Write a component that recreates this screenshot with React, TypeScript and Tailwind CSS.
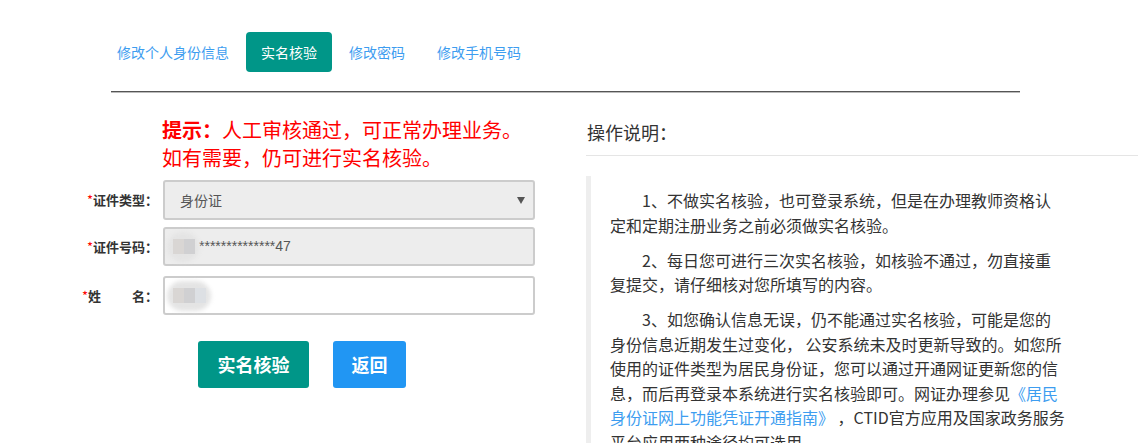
import React from 'react'

const tabs = ['修改个人身份信息', '实名核验', '修改密码', '修改手机号码']

function Label({ children }: { children: React.ReactNode }) {
  return (
    <div className="w-[80px] shrink-0 text-right text-[13px] font-bold text-[#333] pr-[2px]">
      <span className="text-[#f00] font-normal">*</span>
      {children}
    </div>
  )
}

function Blur({ w }: { w: number }) {
  return (
    <div className="relative h-[30px] shrink-0" style={{ width: w }}>
      <div className="absolute inset-0 rounded-full bg-[#e4e4e4] blur-[2px]" />
      <div className="absolute left-[6px] top-[7px] flex">
        <div className="w-[11px] h-[15px] bg-[#d9d6d4]" />
        <div className="w-[11px] h-[15px] bg-[#d0d0d2]" />
        {w > 34 && <div className="w-[11px] h-[15px] bg-[#dde0e4]" />}
      </div>
    </div>
  )
}

export default function App() {
  return (
    <div className="w-[1138px] h-[443px] overflow-hidden bg-white font-['Microsoft_YaHei','Noto_Sans_CJK_SC',sans-serif] text-[#333]">
      {/* Tabs */}
      <div className="flex gap-[2px] pl-[102px] pt-[32px]">
        {tabs.map((t, i) => (
          <div
            key={t}
            className={`h-[40px] px-[15px] flex items-center text-[14px] rounded-[4px] ${i === 1 ? 'bg-[#009688] text-white' : 'text-[#3d9df0]'}`}
          >
            {t}
          </div>
        ))}
      </div>
      <div className="ml-[111px] mt-[19px] w-[909px] h-[2px] border-t border-[#555] bg-[#bbb]" />

      <div className="flex">
        {/* Left */}
        <div className="w-[586px] shrink-0">
          <div className="ml-[162px] mt-[23px] text-[20px] leading-[28px] text-[#f00]">
            <span className="font-bold">提示：</span>人工审核通过，可正常办理业务。
            <br />
            如有需要，仍可进行实名核验。
          </div>

          <div className="mt-[8px] pl-[80px] flex items-center">
            <Label>证件类型：</Label>
            <div className="ml-[3px] w-[372px] h-[40px] border-2 border-[#ccc] rounded-[3px] bg-[#ededed] flex items-center justify-between pl-[15px] pr-[8px]">
              <span className="text-[14px] text-[#555]">身份证</span>
              <span className="w-0 h-0 border-l-[4px] border-r-[4px] border-t-[7px] border-l-transparent border-r-transparent border-t-[#555]" />
            </div>
          </div>

          <div className="mt-[7px] pl-[80px] flex items-center">
            <Label>证件号码：</Label>
            <div className="ml-[3px] w-[372px] h-[39px] border-2 border-[#ccc] rounded-[3px] bg-[#ededed] flex items-center pl-[2px]">
              <Blur w={32} />
              <span className="text-[14px] text-[#555] font-['Liberation_Sans',sans-serif]">**************47</span>
            </div>
          </div>

          <div className="mt-[10px] pl-[80px] flex items-center">
            <div className="w-[80px] shrink-0 text-right text-[13px] font-bold text-[#333] pr-[2px] flex justify-end">
              <span className="text-[#f00] font-normal">*</span>
              <span>姓</span>
              <span className="ml-[31px]">名：</span>
            </div>
            <div className="ml-[3px] w-[372px] h-[39px] border-2 border-[#ccc] rounded-[3px] bg-white flex items-center pl-[2px]">
              <Blur w={44} />
            </div>
          </div>

          <div className="mt-[26px] ml-[198px] flex gap-[24px]">
            <button className="w-[111px] h-[47px] rounded-[3px] bg-[#009688] text-white text-[18px] font-bold">实名核验</button>
            <button className="w-[73px] h-[47px] rounded-[3px] bg-[#2196f3] text-white text-[18px] font-bold">返回</button>
          </div>
        </div>

        {/* Right */}
        <div className="flex-1">
          <div className="mt-[25px] pl-[1px] text-[18px] leading-[28px] text-[#333] pb-[9px] border-b border-[#e5e5e5]">操作说明：</div>
          <div className="mt-[20px] border-l-[5px] border-[#eee] pl-[19px] pt-[12px] text-[16px] leading-[24.5px] text-[#333] whitespace-nowrap">
            <p className="indent-[32px] mb-[10.5px]">
              1、不做实名核验，也可登录系统，但是在办理教师资格认
              <br />
              定和定期注册业务之前必须做实名核验。
            </p>
            <p className="indent-[32px] mb-[10.5px]">
              2、每日您可进行三次实名核验，如核验不通过，勿直接重
              <br />
              复提交，请仔细核对您所填写的内容。
            </p>
            <p className="indent-[32px] mb-[10.5px]">
              3、如您确认信息无误，仍不能通过实名核验，可能是您的
              <br />
              身份信息近期发生过变化， 公安系统未及时更新导致的。如您所
              <br />
              使用的证件类型为居民身份证，您可以通过开通网证更新您的信
              <br />
              息，而后再登录本系统进行实名核验即可。网证办理参见<span className="text-[#3d9df0]">《居民</span>
              <br />
              <span className="text-[#3d9df0]">身份证网上功能凭证开通指南》</span> ，CTID官方应用及国家政务服务
              <br />
              平台应用两种途径均可选用。
            </p>
          </div>
        </div>
      </div>
    </div>
  )
}
